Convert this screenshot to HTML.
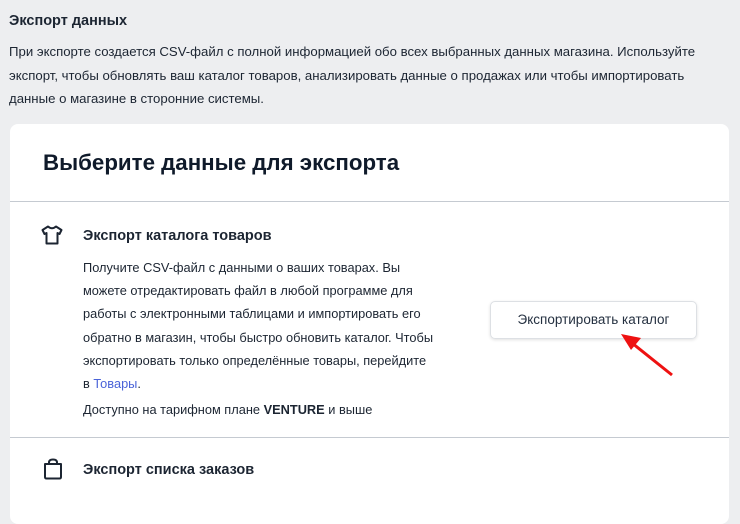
<!DOCTYPE html>
<html><head><meta charset="utf-8"><style>
*{margin:0;padding:0;box-sizing:border-box}
body{width:740px;height:490px;overflow:hidden;background:#edeef0;font-family:"Liberation Sans",sans-serif;color:#1c2532;}
.h{position:absolute;left:9px;top:13px;font-size:14.5px;font-weight:bold;}
.d{position:absolute;left:9px;top:40px;width:725px;font-size:13.2px;line-height:23.5px;}
.card{position:absolute;left:10px;top:124px;width:719px;height:400px;background:#fff;border-radius:8px;}
.t{position:absolute;left:33px;top:26px;font-size:22.3px;font-weight:bold;color:#0f1a2a;}
.hr{position:absolute;left:0;width:719px;height:1px;background:#c5cad1;}
.st{position:absolute;left:73px;font-size:14.5px;font-weight:bold;}
.b{position:absolute;left:73px;top:132px;width:400px;font-size:12.8px;line-height:23.2px;white-space:nowrap}
.b a{color:#4a63d8;text-decoration:none}
.btn{position:absolute;left:480px;top:177px;width:207px;height:38px;border:1px solid #dde0e4;border-radius:5px;box-shadow:0 1px 3px rgba(0,0,0,.12);font-size:13.5px;text-align:center;line-height:36px;color:#243040;}
</style></head><body>
<div class="h">Экспорт данных</div>
<div class="d">При экспорте создается CSV-файл с полной информацией обо всех выбранных данных магазина. Используйте экспорт, чтобы обновлять ваш каталог товаров, анализировать данные о продажах или чтобы импортировать данные о магазине в сторонние системы.</div>
<div class="card">
<div class="t">Выберите данные для экспорта</div>
<div class="hr" style="top:77px"></div>
<svg style="position:absolute;left:31px;top:101px" width="22" height="20" viewBox="0 0 22 20"><path d="M7 1.5 L1.5 5 L3.5 9 L5.5 8 V18.5 H16.5 V8 L18.5 9 L20.5 5 L15 1.5 Q11 5 7 1.5Z" fill="none" stroke="#1c2532" stroke-width="2" stroke-linejoin="round"/></svg>
<div class="st" style="top:104px">Экспорт каталога товаров</div>
<div class="b">Получите CSV-файл с данными о ваших товарах. Вы<br>можете отредактировать файл в любой программе для<br>работы с электронными таблицами и импортировать его<br>обратно в магазин, чтобы быстро обновить каталог. Чтобы<br>экспортировать только определённые товары, перейдите<br>в <a>Товары</a>.<div style="margin-top:3px">Доступно на тарифном плане <b>VENTURE</b> и выше</div></div>
<div class="btn">Экспортировать каталог</div>
<div class="hr" style="top:313px"></div>
<svg style="position:absolute;left:33px;top:334px" width="20" height="22" viewBox="0 0 20 22"><path d="M2 6 H18 V19 Q18 20.5 16.5 20.5 H3.5 Q2 20.5 2 19Z M6 6 V4.5 Q6 1.5 10 1.5 Q14 1.5 14 4.5 V6" fill="none" stroke="#1c2532" stroke-width="2" stroke-linejoin="round"/></svg>
<div class="st" style="top:338px">Экспорт списка заказов</div>
</div>
<svg style="position:absolute;left:0;top:0" width="740" height="490"><line x1="672" y1="375" x2="632" y2="343" stroke="#ee1111" stroke-width="3"/><polygon points="621,334 641,338 631,350" fill="#ee1111"/></svg>
</body></html>
